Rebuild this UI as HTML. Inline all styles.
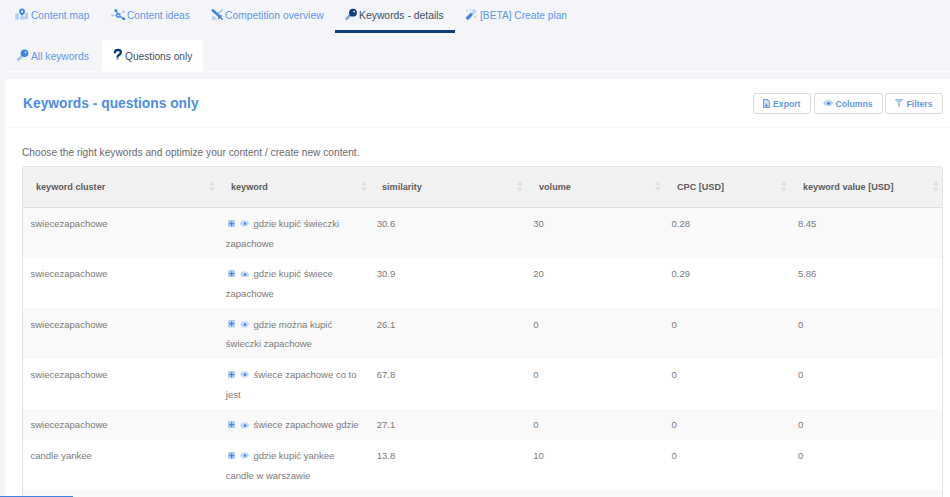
<!DOCTYPE html>
<html><head><meta charset="utf-8">
<style>
*{box-sizing:border-box;margin:0;padding:0}
html,body{width:950px;height:497px;overflow:hidden}
body{background:#f3f5f9;font-family:"Liberation Sans",sans-serif;position:relative;color:#666}
.abs{position:absolute;white-space:nowrap}
.nav{color:#6195e6;font-size:10.2px;line-height:12px}
.nav svg{position:absolute}
.underline{position:absolute;left:335px;top:30px;width:120px;height:3px;background:#0e3c7c}
.tab2{position:absolute;left:102px;top:40px;width:101px;height:31px;background:#fff;border-radius:3px 3px 0 0}
.sep{position:absolute;left:5px;top:71px;width:945px;height:1px;background:#fbfbfd}
.card{position:absolute;left:5px;top:79px;width:950px;height:430px;background:#fff}
.title{color:#4f8ce6;font-weight:bold;font-size:13.8px;line-height:16px;margin-top:0.5px}
.hr{position:absolute;left:5px;top:127px;width:945px;height:1px;background:#f8f8f8}
.desc{color:#6a6a6a;font-size:10.2px;line-height:12px;margin-top:0.5px}
.btn{position:absolute;top:93px;height:21px;border:1px solid #dadada;border-radius:3px;background:#fff;color:#6396e6;font-weight:bold;font-size:8.7px;line-height:10px}
.btn span{position:absolute;top:4.5px}
.table{position:absolute;left:22px;top:166px;width:921px;height:340px;border:1px solid #e3e3e3;border-radius:3px;overflow:hidden;background:#fff}
.thead{position:absolute;left:0;top:0;width:100%;height:41px;background:#f1f1f1;border-bottom:1px solid #dcdcdc}
.th{position:absolute;top:15px;color:#5c5c5c;font-weight:bold;font-size:9.1px;white-space:nowrap}
.sort{position:absolute;top:14px;width:6px;height:11px}
.row{position:absolute;left:0;width:100%}
.odd{background:#f9f9f9}
.td{position:absolute;color:#7a7a7a;font-size:9.5px;line-height:19.8px;white-space:nowrap;margin-top:0.8px}
.ic{position:absolute}
</style></head><body>

<!-- nav row 1 -->
<svg class="abs" style="left:12px;top:6px" width="20" height="16" viewBox="0 0 20 16">
  <path d="M3.2 7.6 L6.8 6.9 L6.8 13.4 L3.2 13.9Z M7.9 10.2 L12.6 10.2 L12.6 13.6 L7.9 13.4Z M12.9 7.3 L16.1 6.4 L16.1 12.7 L12.9 13.5Z" fill="#b4cef3"/>
  <path d="M10 2.6 C8.1 2.6 7 4 7 5.6 C7 7.6 10 9.9 10 9.9 C10 9.9 13 7.6 13 5.6 C13 4 11.9 2.6 10 2.6Z" fill="#3d84e6"/>
  <circle cx="10" cy="5.6" r="1.1" fill="#eef3fb"/>
</svg>
<div class="abs nav" style="left:31px;top:10px">Content map</div>

<svg class="abs" style="left:108px;top:6px" width="20" height="16" viewBox="0 0 20 16">
  <path d="M4.2 9.5 H8 M10.3 9.5 L15.6 5.6" stroke="#b4cef3" stroke-width="1"/>
  <path d="M7.9 4.4 L10.3 9.5 L15.8 12.7" stroke="#3d84e6" stroke-width="1.3" fill="none"/>
  <circle cx="7.9" cy="4.4" r="1.5" fill="#3d84e6"/>
  <circle cx="15.8" cy="12.7" r="1.5" fill="#3d84e6"/>
  <circle cx="10.3" cy="9.5" r="1.75" fill="#f3f4f8" stroke="#3d84e6" stroke-width="1.3"/>
  <circle cx="15.6" cy="5.6" r="1.3" fill="#b4cef3"/>
  <circle cx="4.2" cy="9.5" r="1.3" fill="#b4cef3"/>
</svg>
<div class="abs nav" style="left:127px;top:10px">Content ideas</div>

<svg class="abs" style="left:208px;top:5px" width="20" height="16" viewBox="0 0 20 16">
  <path d="M14 5 L10.8 8.1" stroke="#b4cef3" stroke-width="2.3" stroke-linecap="round"/>
  <path d="M4.8 11.3 L7.6 13.9 M6.1 12.7 L4.6 14.3" stroke="#b4cef3" stroke-width="1.8" stroke-linecap="round"/>
  <path d="M4.7 5.3 L11.3 11.3" stroke="#3d84e6" stroke-width="2.6" stroke-linecap="round"/>
  <path d="M10.6 13.3 L13.3 10.7 M12.1 12.1 L14.3 14.2" stroke="#3d84e6" stroke-width="1.5" stroke-linecap="round"/>
</svg>
<div class="abs nav" style="left:225px;top:10px;font-size:10.32px">Competition overview</div>

<svg class="abs" style="left:342px;top:5px" width="20" height="16" viewBox="0 0 20 16">
  <path d="M8.6 9.8 L4.6 13.8" stroke="#8eaad0" stroke-width="2.7" stroke-linecap="round"/>
  <circle cx="10.95" cy="7.7" r="3.9" fill="#0b3d82"/>
  <circle cx="12.1" cy="6.6" r="0.95" fill="#dfe8f5"/>
</svg>
<div class="abs nav" style="left:359px;top:10px;color:#3e4f66;font-size:10.38px">Keywords - details</div>
<div class="underline"></div>

<svg class="abs" style="left:462px;top:5px" width="20" height="16" viewBox="0 0 20 16">
  <path d="M10.6 4.8 L12.6 3.9 L14.8 6.4 L11 9.7 L8.7 7.7Z" fill="#b4cef3"/>
  <path d="M11.6 5.9 L12.4 5.5 L12.9 6.2 L11.2 7.6 L10.7 7.1Z" fill="#e6eefa"/>
  <path d="M3.9 12.6 L8.7 7.7 L11 9.7 L6.4 14.8 Q5 15 3.9 13.8Z" fill="#3d84e6"/>
  <path d="M5.2 4.3 L6.4 5.5 L5.2 6.7 L4 5.5Z M8.5 3.6 L9.4 4.5 L8.5 5.4 L7.6 4.5Z" fill="#b4cef3"/>
  <circle cx="13" cy="11.9" r="1.1" fill="#b4cef3"/>
</svg>
<div class="abs nav" style="left:480px;top:10px">[BETA] Create plan</div>

<!-- nav row 2 -->
<div class="tab2"></div>
<svg class="abs" style="left:14px;top:46px" width="20" height="16" viewBox="0 0 20 16">
  <path d="M8 10 L4.2 13.8" stroke="#a9c6f0" stroke-width="2.8" stroke-linecap="round"/>
  <circle cx="10.5" cy="7.25" r="3.8" fill="#3f85e3"/>
  <circle cx="11.45" cy="6.3" r="0.85" fill="#eef3fb"/>
</svg>
<div class="abs nav" style="left:31px;top:51px;font-size:10.3px">All keywords</div>
<svg class="abs" style="left:108px;top:46px" width="20" height="16" viewBox="0 0 20 16">
  <path d="M6.9 6.4 Q7.1 4 10 4 Q12.9 4 12.9 6.3 Q12.9 7.8 11.3 8.7 Q9.7 9.6 9.6 10.6" stroke="#0b3d82" stroke-width="2.3" fill="none" stroke-linecap="round"/>
  <circle cx="9.35" cy="13" r="1.15" fill="#8aa6cc"/>
</svg>
<div class="abs nav" style="left:125px;top:51px;color:#3e4f66">Questions only</div>
<div class="sep"></div>

<!-- card -->
<div class="card"></div>
<div class="abs title" style="left:23px;top:95px">Keywords - questions only</div>
<div class="hr"></div>

<div class="btn" style="left:753px;width:58px">
  <svg class="abs" style="left:9px;top:4.5px" width="7" height="9" viewBox="0 0 7 9"><path d="M0.6 0.6 H4.4 L6.4 2.6 V8.4 H0.6Z" fill="#dce8fb" stroke="#6d9fea" stroke-width="1.1" stroke-linejoin="round"/><path d="M4.2 0.6 V2.8 H6.4" fill="#9fc0f2"/><path d="M3.3 4.6 V7.3 M2.1 6.1 L3.3 7.4 L4.5 6.1" stroke="#3f7fe0" stroke-width="1" fill="none"/></svg>
  <span style="left:19px">Export</span>
</div>
<div class="btn" style="left:813.5px;width:69px">
  <svg class="abs" style="left:8.6px;top:5.7px" width="10.2" height="6.5" viewBox="0 0 10.2 6.5"><path d="M0.2 3.25 Q1.6 0.1 5.1 0.1 Q8.6 0.1 10 3.25 Q8.6 6.4 5.1 6.4 Q1.6 6.4 0.2 3.25Z" fill="#b8d2f6"/><circle cx="5.4" cy="3.3" r="2.2" fill="#e6effc"/><circle cx="5.5" cy="3.3" r="1.6" fill="#4087e6"/></svg>
  <span style="left:21px">Columns</span>
</div>
<div class="btn" style="left:885px;width:58px">
  <svg class="abs" style="left:8.9px;top:4.8px" width="8.2" height="8" viewBox="0 0 8.2 8"><path d="M0 0 H8.2 V0.9 L5.2 3.6 V7.4 Q4.1 8.2 3 7.4 V3.6 L0 0.9Z" fill="#a7c7f3"/></svg>
  <span style="left:20.5px">Filters</span>
</div>

<div class="abs desc" style="left:22px;top:146px">Choose the right keywords and optimize your content / create new content.</div>

<!-- table -->
<div class="table">
  <div class="thead"></div>
  <div class="th" style="left:13px">keyword cluster</div>
  <div class="th" style="left:208px">keyword</div>
  <div class="th" style="left:359px">similarity</div>
  <div class="th" style="left:516px">volume</div>
  <div class="th" style="left:654px">CPC [USD]</div>
  <div class="th" style="left:780px">keyword value [USD]</div>
  <svg class="sort" style="left:186px" viewBox="0 0 6 11"><path d="M2.75 0 L5.5 4.3 H0Z M2.75 10.5 L5.5 6.2 H0Z" fill="#dedede"/></svg>
  <svg class="sort" style="left:337.5px" viewBox="0 0 6 11"><path d="M2.75 0 L5.5 4.3 H0Z M2.75 10.5 L5.5 6.2 H0Z" fill="#dedede"/></svg>
  <svg class="sort" style="left:493.5px" viewBox="0 0 6 11"><path d="M2.75 0 L5.5 4.3 H0Z M2.75 10.5 L5.5 6.2 H0Z" fill="#dedede"/></svg>
  <svg class="sort" style="left:631.7px" viewBox="0 0 6 11"><path d="M2.75 0 L5.5 4.3 H0Z M2.75 10.5 L5.5 6.2 H0Z" fill="#dedede"/></svg>
  <svg class="sort" style="left:758.3px" viewBox="0 0 6 11"><path d="M2.75 0 L5.5 4.3 H0Z M2.75 10.5 L5.5 6.2 H0Z" fill="#dedede"/></svg>
  <svg class="sort" style="left:910px" viewBox="0 0 6 11"><path d="M2.75 0 L5.5 4.3 H0Z M2.75 10.5 L5.5 6.2 H0Z" fill="#dedede"/></svg>

  <div class="row odd" style="top:41px;height:50px"></div>
  <div class="row" style="top:91px;height:50px"></div>
  <div class="row odd" style="top:141px;height:51px"></div>
  <div class="row" style="top:192px;height:50px"></div>
  <div class="row odd" style="top:242px;height:31px"></div>
  <div class="row" style="top:273px;height:50px"></div>
  <div class="row odd" style="top:323px;height:30px"></div>
  <div class="td" style="left:7.5px;top:46.05px">swiecezapachowe</div>
  <svg class="ic" style="left:204.7px;top:52.5px" width="7.2" height="7.4" viewBox="0 0 7.2 7.4"><rect width="7.2" height="7.4" rx="0.8" fill="#b3cff5"/><path d="M3.6 1.2V6.2M1.1 3.7H6.1" stroke="#3f85e3" stroke-width="1.2"/></svg>
  <svg class="ic" style="left:216.8px;top:53.2px" width="9.4" height="6.8" viewBox="0 0 9.4 6.8"><path d="M0.2 3.4 Q1.5 0.2 4.7 0.2 Q7.9 0.2 9.2 3.4 Q7.9 6.6 4.7 6.6 Q1.5 6.6 0.2 3.4Z" fill="#b9d3f6"/><circle cx="4.9" cy="3.4" r="2.2" fill="#eef4fd"/><circle cx="5" cy="3.5" r="1.5" fill="#3f85e3"/></svg>
  <div class="td" style="left:230.5px;top:46.05px">gdzie kupić świeczki</div>
  <div class="td" style="left:202.8px;top:65.85px">zapachowe</div>
  <div class="td" style="left:353.8px;top:46.05px">30.6</div>
  <div class="td" style="left:510.3px;top:46.05px">30</div>
  <div class="td" style="left:648.6px;top:46.05px">0.28</div>
  <div class="td" style="left:774.9px;top:46.05px">8.45</div>
  <div class="td" style="left:7.5px;top:96.45px">swiecezapachowe</div>
  <svg class="ic" style="left:204.7px;top:102.9px" width="7.2" height="7.4" viewBox="0 0 7.2 7.4"><rect width="7.2" height="7.4" rx="0.8" fill="#b3cff5"/><path d="M3.6 1.2V6.2M1.1 3.7H6.1" stroke="#3f85e3" stroke-width="1.2"/></svg>
  <svg class="ic" style="left:216.8px;top:103.6px" width="9.4" height="6.8" viewBox="0 0 9.4 6.8"><path d="M0.2 3.4 Q1.5 0.2 4.7 0.2 Q7.9 0.2 9.2 3.4 Q7.9 6.6 4.7 6.6 Q1.5 6.6 0.2 3.4Z" fill="#b9d3f6"/><circle cx="4.9" cy="3.4" r="2.2" fill="#eef4fd"/><circle cx="5" cy="3.5" r="1.5" fill="#3f85e3"/></svg>
  <div class="td" style="left:230.5px;top:96.45px">gdzie kupić świece</div>
  <div class="td" style="left:202.8px;top:116.25px">zapachowe</div>
  <div class="td" style="left:353.8px;top:96.45px">30.9</div>
  <div class="td" style="left:510.3px;top:96.45px">20</div>
  <div class="td" style="left:648.6px;top:96.45px">0.29</div>
  <div class="td" style="left:774.9px;top:96.45px">5.86</div>
  <div class="td" style="left:7.5px;top:146.85px">swiecezapachowe</div>
  <svg class="ic" style="left:204.7px;top:153.3px" width="7.2" height="7.4" viewBox="0 0 7.2 7.4"><rect width="7.2" height="7.4" rx="0.8" fill="#b3cff5"/><path d="M3.6 1.2V6.2M1.1 3.7H6.1" stroke="#3f85e3" stroke-width="1.2"/></svg>
  <svg class="ic" style="left:216.8px;top:154.0px" width="9.4" height="6.8" viewBox="0 0 9.4 6.8"><path d="M0.2 3.4 Q1.5 0.2 4.7 0.2 Q7.9 0.2 9.2 3.4 Q7.9 6.6 4.7 6.6 Q1.5 6.6 0.2 3.4Z" fill="#b9d3f6"/><circle cx="4.9" cy="3.4" r="2.2" fill="#eef4fd"/><circle cx="5" cy="3.5" r="1.5" fill="#3f85e3"/></svg>
  <div class="td" style="left:230.5px;top:146.85px">gdzie można kupić</div>
  <div class="td" style="left:202.8px;top:166.65px">świeczki zapachowe</div>
  <div class="td" style="left:353.8px;top:146.85px">26.1</div>
  <div class="td" style="left:510.3px;top:146.85px">0</div>
  <div class="td" style="left:648.6px;top:146.85px">0</div>
  <div class="td" style="left:774.9px;top:146.85px">0</div>
  <div class="td" style="left:7.5px;top:197.25px">swiecezapachowe</div>
  <svg class="ic" style="left:204.7px;top:203.7px" width="7.2" height="7.4" viewBox="0 0 7.2 7.4"><rect width="7.2" height="7.4" rx="0.8" fill="#b3cff5"/><path d="M3.6 1.2V6.2M1.1 3.7H6.1" stroke="#3f85e3" stroke-width="1.2"/></svg>
  <svg class="ic" style="left:216.8px;top:204.4px" width="9.4" height="6.8" viewBox="0 0 9.4 6.8"><path d="M0.2 3.4 Q1.5 0.2 4.7 0.2 Q7.9 0.2 9.2 3.4 Q7.9 6.6 4.7 6.6 Q1.5 6.6 0.2 3.4Z" fill="#b9d3f6"/><circle cx="4.9" cy="3.4" r="2.2" fill="#eef4fd"/><circle cx="5" cy="3.5" r="1.5" fill="#3f85e3"/></svg>
  <div class="td" style="left:230.5px;top:197.25px">świece zapachowe co to</div>
  <div class="td" style="left:202.8px;top:217.05px">jest</div>
  <div class="td" style="left:353.8px;top:197.25px">67.8</div>
  <div class="td" style="left:510.3px;top:197.25px">0</div>
  <div class="td" style="left:648.6px;top:197.25px">0</div>
  <div class="td" style="left:774.9px;top:197.25px">0</div>
  <div class="td" style="left:7.5px;top:247.65px">swiecezapachowe</div>
  <svg class="ic" style="left:204.7px;top:254.1px" width="7.2" height="7.4" viewBox="0 0 7.2 7.4"><rect width="7.2" height="7.4" rx="0.8" fill="#b3cff5"/><path d="M3.6 1.2V6.2M1.1 3.7H6.1" stroke="#3f85e3" stroke-width="1.2"/></svg>
  <svg class="ic" style="left:216.8px;top:254.8px" width="9.4" height="6.8" viewBox="0 0 9.4 6.8"><path d="M0.2 3.4 Q1.5 0.2 4.7 0.2 Q7.9 0.2 9.2 3.4 Q7.9 6.6 4.7 6.6 Q1.5 6.6 0.2 3.4Z" fill="#b9d3f6"/><circle cx="4.9" cy="3.4" r="2.2" fill="#eef4fd"/><circle cx="5" cy="3.5" r="1.5" fill="#3f85e3"/></svg>
  <div class="td" style="left:230.5px;top:247.65px">świece zapachowe gdzie</div>
  <div class="td" style="left:353.8px;top:247.65px">27.1</div>
  <div class="td" style="left:510.3px;top:247.65px">0</div>
  <div class="td" style="left:648.6px;top:247.65px">0</div>
  <div class="td" style="left:774.9px;top:247.65px">0</div>
  <div class="td" style="left:7.5px;top:278.25px">candle yankee</div>
  <svg class="ic" style="left:204.7px;top:284.7px" width="7.2" height="7.4" viewBox="0 0 7.2 7.4"><rect width="7.2" height="7.4" rx="0.8" fill="#b3cff5"/><path d="M3.6 1.2V6.2M1.1 3.7H6.1" stroke="#3f85e3" stroke-width="1.2"/></svg>
  <svg class="ic" style="left:216.8px;top:285.4px" width="9.4" height="6.8" viewBox="0 0 9.4 6.8"><path d="M0.2 3.4 Q1.5 0.2 4.7 0.2 Q7.9 0.2 9.2 3.4 Q7.9 6.6 4.7 6.6 Q1.5 6.6 0.2 3.4Z" fill="#b9d3f6"/><circle cx="4.9" cy="3.4" r="2.2" fill="#eef4fd"/><circle cx="5" cy="3.5" r="1.5" fill="#3f85e3"/></svg>
  <div class="td" style="left:230.5px;top:278.25px">gdzie kupić yankee</div>
  <div class="td" style="left:202.8px;top:298.05px">candle w warszawie</div>
  <div class="td" style="left:353.8px;top:278.25px">13.8</div>
  <div class="td" style="left:510.3px;top:278.25px">10</div>
  <div class="td" style="left:648.6px;top:278.25px">0</div>
  <div class="td" style="left:774.9px;top:278.25px">0</div>
</div>
<div class="abs" style="left:0;top:496px;width:73px;height:1px;background:#3f82e0"></div>
</body></html>
